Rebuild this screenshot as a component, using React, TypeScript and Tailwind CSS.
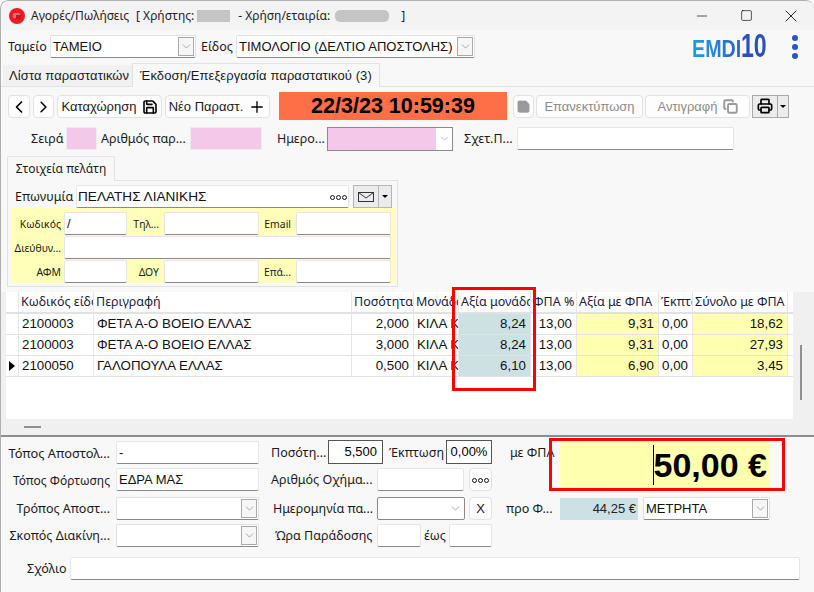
import type { ReactNode } from 'react';
import { ChevronDown, ChevronLeft, ChevronRight, Copy, Minus, Plus, Printer, Save, Square, X } from 'lucide-react';

const ui = "font-['Noto_Sans','Open_Sans',sans-serif]";
const data = "font-['Liberation_Sans',Arial,sans-serif]";

function Label({ children, w, size = 'text-[12.5px]', className = '' }: { children: ReactNode; w: string; size?: string; className?: string }) {
  return <div className={`${w} ${size} shrink-0 translate-y-[1px] whitespace-nowrap leading-none text-[#1a1a1a] ${className}`}>{children}</div>;
}

function Input({ w, value, className = '' }: { w: string; value?: string; className?: string }) {
  return (
    <div className={`${w} ${data} flex h-[23px] shrink-0 items-center rounded-[2px] border border-[#e6e6e6] border-b-[#8a8a8a] bg-white px-[2px] pt-[1px] text-[13px] text-[#111] ${className}`}>
      {value}
    </div>
  );
}

function Select({ w, value, boxed = false, dark = false }: { w: string; value?: string; boxed?: boolean; dark?: boolean }) {
  return (
    <div className={`${w} ${data} flex h-[23px] shrink-0 items-center justify-between rounded-[2px] border ${dark ? 'border-[#8a8a8a]' : 'border-[#e0e0e0] border-b-[#8a8a8a]'} bg-white text-[13px] text-[#111]`}>
      <span className="flex h-full flex-1 items-center px-[2px] pt-[1px]">{value}</span>
      <span className={`mr-[1px] flex h-[19px] w-[16px] items-center justify-center ${boxed ? 'border border-[#a9a9a9] bg-[#f6f6f6]' : ''}`}>
        <ChevronDown size={13} strokeWidth={1} className="text-[#666]" />
      </span>
    </div>
  );
}

function Dots() {
  return (
    <span className="flex gap-[1px]">
      <span className="h-[5px] w-[5px] rounded-full border border-[#111]" />
      <span className="h-[5px] w-[5px] rounded-full border border-[#111]" />
      <span className="h-[5px] w-[5px] rounded-full border border-[#111]" />
    </span>
  );
}

function Btn({ children, w, disabled = false }: { children: ReactNode; w: string; disabled?: boolean }) {
  return (
    <div className={`${w} ${data} flex h-[23px] shrink-0 items-center justify-center gap-[5px] rounded-[4px] border border-[#e2e2e2] bg-[#fdfdfd] pt-[1px] text-[13px] ${disabled ? 'text-[#8c8c8c]' : 'text-[#1a1a1a]'}`}>
      {children}
    </div>
  );
}

function Caret() {
  return <span className="h-0 w-0 border-x-[3px] border-t-[3px] border-x-transparent border-t-black" />;
}

const columns = [
  { w: 'w-[75px]', title: 'Κωδικός είδους' },
  { w: 'w-[258px]', title: 'Περιγραφή' },
  { w: 'w-[62px]', title: 'Ποσότητα' },
  { w: 'w-[45px]', title: 'Μονάδα' },
  { w: 'w-[72px]', title: 'Αξία μονάδας' },
  { w: 'w-[46px]', title: 'ΦΠΑ %' },
  { w: 'w-[82px]', title: 'Αξία με ΦΠΑ' },
  { w: 'w-[34px]', title: 'Έκπτωση' },
  { w: 'w-[95px]', title: 'Σύνολο με ΦΠΑ' },
];

const lines = [
  { code: '2100003', desc: 'ΦΕΤΑ Α-Ο ΒΟΕΙΟ ΕΛΛΑΣ', qty: '2,000', unit: '8,24', vat: '9,31', total: '18,62' },
  { code: '2100003', desc: 'ΦΕΤΑ Α-Ο ΒΟΕΙΟ ΕΛΛΑΣ', qty: '3,000', unit: '8,24', vat: '9,31', total: '27,93' },
  { code: '2100050', desc: 'ΓΑΛΟΠΟΥΛΑ ΕΛΛΑΣ', qty: '0,500', unit: '6,10', vat: '6,90', total: '3,45' },
];

function Cell({ w, children, right = false, bg = '' }: { w: string; children: ReactNode; right?: boolean; bg?: string }) {
  return (
    <div className={`${w} ${bg} flex h-full shrink-0 items-center overflow-hidden whitespace-nowrap border-r border-[#e6e6e6] ${right ? 'justify-end pr-[4px]' : 'pl-[3px]'}`}>
      {children}
    </div>
  );
}

function Grid() {
  return (
    <div className="relative flex h-[145px] shrink-0 border-b-2 border-[#8c8c8c] bg-[#f0f0f0] pl-[6px]">
      <div className="flex w-[787px] flex-col">
        <div className={`${data} flex-1 bg-white text-[13.3px] text-[#111]`}>
          <div className="flex h-[22px] border-b-2 border-[#e2e2e2]">
            <div className="w-[13px] shrink-0 border-r border-[#e6e6e6]" />
            {columns.map((c) => (
              <div key={c.title} className={`${c.w} ${ui} flex shrink-0 items-center overflow-hidden whitespace-nowrap border-r border-[#e6e6e6] px-[2px] pt-[1px] text-[12.5px] text-[#1a1a40]`}>
                {c.title}
              </div>
            ))}
          </div>
          {lines.map((l, i) => (
            <div key={i} className="flex h-[21px] border-b border-[#e2e2e2]">
              <div className="flex w-[13px] shrink-0 items-center justify-center border-r border-[#e6e6e6]">
                {i === 2 && <span className="h-0 w-0 border-y-[5px] border-l-[6px] border-y-transparent border-l-black" />}
              </div>
              <Cell w="w-[75px]">{l.code}</Cell>
              <Cell w="w-[258px]">{l.desc}</Cell>
              <Cell w="w-[62px]" right>{l.qty}</Cell>
              <Cell w="w-[45px]">ΚΙΛΑ Κ</Cell>
              <Cell w="w-[72px]" right bg="bg-[#cde1e5]">{l.unit}</Cell>
              <Cell w="w-[46px]" right>13,00</Cell>
              <Cell w="w-[82px]" right bg="bg-[#ffffb0]">{l.vat}</Cell>
              <Cell w="w-[34px]" right>0,00</Cell>
              <Cell w="w-[95px]" right bg="bg-[#ffffb0]">{l.total}</Cell>
            </div>
          ))}
        </div>
        <div className="flex h-[16px] shrink-0 items-center pl-[18px]">
          <div className="h-[2px] w-[17px] bg-[#8f8f8f]" />
        </div>
      </div>
      <div className="flex w-[21px] justify-center pt-[53px]">
        <div className="ml-[-6px] h-[55px] w-[2px] bg-[#8f8f8f]" />
      </div>
      <div className="absolute left-[452px] top-[-5px] h-[104px] w-[84px] border-[3px] border-[#ff0000]" />
    </div>
  );
}

function Customer() {
  const small = 'text-[10.4px]';
  return (
    <div className="ml-[7px] mt-[6px] w-[391px]">
      <div className={`${ui} relative z-10 flex h-[25px] w-[108px] items-center justify-center rounded-t-[2px] border border-b-0 border-[#e2e2e2] bg-[#f8f8f8] text-[12px] text-[#1a1a1a]`}>
        Στοιχεία πελάτη
      </div>
      <div className="mt-[-1px] h-[107px] border border-[#e2e2e2] pl-[3px] pr-[1px] pt-[4px]">
        <div className={`${ui} flex h-[23px] items-center pl-[4px]`}>
          <Label w="w-[61px]">Επωνυμία</Label>
          <div className={`${data} flex h-[23px] w-[273px] items-center justify-between rounded-[2px] border border-[#e6e6e6] border-b-[#8a8a8a] bg-white pl-[1px] pr-[1px] pt-[1px] text-[13.6px] text-[#111]`}>
            ΠΕΛΑΤΗΣ ΛΙΑΝΙΚΗΣ
            <Dots />
          </div>
          <div className="ml-[4px] flex h-[23px] w-[39px] border border-[#b5b5b5] bg-[#ececec]">
            <div className="flex w-[25px] items-center justify-center border-r border-[#b5b5b5]">
              <svg width="16" height="10" viewBox="0 0 16 10" fill="none" stroke="#333" strokeWidth="1">
                <rect x="0.5" y="0.5" width="15" height="9" />
                <path d="M0.5 0.5 8 6l7.5-5.5" />
              </svg>
            </div>
            <div className="flex flex-1 items-center justify-center"><Caret /></div>
          </div>
        </div>
        <div className={`${ui} flex h-[75px] flex-col gap-[1px] bg-[#ffffb9] pl-[2px] pt-[4px]`}>
          <div className="flex items-center">
            <Label w="w-[48px]" size={small} className="text-right">Κωδικός</Label>
            <Input w="w-[63px] ml-[3px]" value="/" />
            <Label w="w-[32px]" size={small} className="text-right">Τηλ...</Label>
            <Input w="w-[95px] ml-[5px]" />
            <Label w="w-[32px]" size={small} className="text-right">Email</Label>
            <Input w="w-[95px] ml-[5px]" />
          </div>
          <div className="flex items-center">
            <Label w="w-[48px]" size={small} className="text-right">Διεύθυν...</Label>
            <Input w="w-[327px] ml-[3px]" />
          </div>
          <div className="flex items-center">
            <Label w="w-[48px]" size={small} className="text-right">ΑΦΜ</Label>
            <Input w="w-[63px] ml-[3px]" />
            <Label w="w-[32px]" size={small} className="text-right">ΔΟΥ</Label>
            <Input w="w-[95px] ml-[5px]" />
            <Label w="w-[32px]" size={small} className="text-right">Επά...</Label>
            <Input w="w-[95px] ml-[5px]" />
          </div>
        </div>
      </div>
    </div>
  );
}

function Footer() {
  return (
    <div className={`${ui} relative flex flex-wrap items-start pt-[3px]`}>
      <div className="flex w-[500px] flex-col">
        <div className="flex items-center">
          <Label w="w-[110px]" size="text-[12.8px]" className="text-right">Τόπος Αποστολ...</Label>
          <Input w="w-[143px] ml-[6px]" value="-" />
          <Label w="w-[56px] ml-[12px]">Ποσότη...</Label>
          <div className={`${data} ml-[1px] flex h-[24px] w-[55px] items-center justify-end border border-[#555] bg-white pr-[5px] text-[13px]`}>5,500</div>
          <Label w="w-[57px] ml-[6px]">Έκπτωση</Label>
          <div className={`${data} flex h-[24px] w-[46px] items-center justify-center border border-[#555] bg-white text-[13px]`}>0,00%</div>
        </div>
        <div className="mt-[4px] flex items-center">
          <Label w="w-[110px]" size="text-[12px]" className="text-right">Τόπος Φόρτωσης</Label>
          <Input w="w-[143px] ml-[6px]" value="ΕΔΡΑ ΜΑΣ" />
          <Label w="w-[106px] ml-[12px]">Αριθμός Οχήμα...</Label>
          <Input w="w-[87px]" />
          <Btn w="w-[23px] ml-[5px]"><Dots /></Btn>
        </div>
        <div className="mt-[6px] flex items-center">
          <Label w="w-[110px]" className="text-right">Τρόπος Αποστ...</Label>
          <Select w="w-[143px] ml-[6px]" boxed />
          <Label w="w-[104px] ml-[14px]">Ημερομηνία πα...</Label>
          <Select w="w-[88px]" dark />
          <Btn w="w-[23px] ml-[4px]">Χ</Btn>
        </div>
        <div className="mt-[4px] flex items-center">
          <Label w="w-[110px]" className="text-right">Σκοπός Διακίνη...</Label>
          <Select w="w-[143px] ml-[6px]" boxed />
          <Label w="w-[102px] ml-[16px]">Ώρα Παράδοσης</Label>
          <Input w="w-[44px]" />
          <Label w="w-[28px]" className="pl-[3px]">έως</Label>
          <Input w="w-[43px]" />
        </div>
      </div>
      <div className="mt-[1px] flex w-[270px] flex-col">
        <div className="flex h-[51px] items-start">
          <Label w="w-[60px] pl-[10px] pt-[5px]">με ΦΠΑ</Label>
          <div className="flex h-[47px] w-[210px] items-center justify-end bg-[#ffffb0] pr-[3px]">
            <span className="h-[40px] w-[1px] bg-black" />
            <span className={`${data} text-[34px] font-bold leading-none text-black`}>50,00 €</span>
          </div>
        </div>
        <div className="mt-[5px] flex items-center">
          <Label w="w-[60px] pl-[6px]">προ Φ...</Label>
          <div className={`${data} flex h-[22px] w-[78px] items-center justify-end bg-[#cde1e5] pr-[2px] text-[13px] text-[#222]`}>44,25 €</div>
          <Select w="w-[127px] ml-[5px]" value="ΜΕΤΡΗΤΑ" boxed />
        </div>
      </div>
      <div className="mt-[10px] flex w-full items-center">
        <Label w="w-[38px] ml-[27px]">Σχόλιο</Label>
        <Input w="w-[730px] ml-[5px]" />
      </div>
      <div className="absolute left-[549px] top-[1px] h-[53px] w-[236px] border-[3px] border-[#ff0000]" />
    </div>
  );
}

export default function App() {
  return (
    <div className={`${ui} relative flex h-[592px] w-[814px] flex-col overflow-hidden rounded-t-[8px] bg-[#f8f8f8]`}>
      {/* Title bar */}
      <div className="flex h-[30px] shrink-0 items-center bg-[#f3f3f3] pl-[9px] pt-[1px]">
        <svg width="16" height="16" viewBox="0 0 16 16" className="shrink-0">
          <circle cx="8" cy="8" r="8" fill="#ee1c25" />
          <rect x="4" y="5" width="7" height="5" rx="1" fill="#e86a6a" />
          <rect x="7" y="7" width="5" height="4" fill="#c9151d" />
        </svg>
        <span className="ml-[6px] text-[12px] text-[#222]">Αγορές/Πωλήσεις</span>
        <span className="ml-[7px] text-[12px] text-[#222]">[ Χρήστης:</span>
        <span className="ml-[3px] h-[12px] w-[33px] bg-[#c4c4c4]" />
        <span className="ml-[8px] text-[12px] text-[#222]">- Χρήση/εταιρία:</span>
        <span className="ml-[5px] h-[12px] w-[54px] rounded-[5px] bg-[#c4c4c4]" />
        <span className="ml-[12px] text-[12px] text-[#222]">]</span>
        <div className="ml-auto flex items-center">
          <Minus size={16} strokeWidth={1} className="mr-[30px] text-black" />
          <Square size={13} strokeWidth={1.2} className="mr-[28px] text-black" />
          <X size={20} strokeWidth={1} className="mr-[13px] text-black" />
        </div>
      </div>

      {/* Cash register and type */}
      <div className="flex h-[28px] shrink-0 items-center pl-[8px] pt-[5px]">
        <Label w="w-[42px]">Ταμείο</Label>
        <Select w="w-[146px]" value="ΤΑΜΕΙΟ" boxed />
        <Label w="w-[35px] ml-[5px]">Είδος</Label>
        <Select w="w-[239px]" value="ΤΙΜΟΛΟΓΙΟ (ΔΕΛΤΙΟ ΑΠΟΣΤΟΛΗΣ)" boxed />
        <div className={`${data} ml-[217px] flex h-[24px] w-[75px] items-end font-bold leading-none`}>
          <span className="mb-[-2px] mr-[-11px] block w-[60px] origin-left scale-x-[0.82] bg-gradient-to-r from-[#1d9ee8] to-[#2a60d0] bg-clip-text text-[24px] text-transparent">EMDI</span>
          <span className="mb-[-3px] block w-[26px] origin-left scale-x-[0.7] text-[33px] text-[#2a50c0]">10</span>
        </div>
        <span className="ml-auto mr-[16px] flex flex-col gap-[3px]">
          <span className="h-[6px] w-[6px] rounded-full bg-[#2d55c0]" />
          <span className="h-[6px] w-[6px] rounded-full bg-[#2d55c0]" />
          <span className="h-[6px] w-[6px] rounded-full bg-[#2d55c0]" />
        </span>
      </div>

      {/* Tabs */}
      <div className={`${data} mt-[5px] flex h-[24px] shrink-0 items-end border-b border-[#e2e2e2] pl-[3px] text-[13px] tracking-[0.1px] text-[#1a1a1a]`}>
        <div className="flex h-[21px] w-[129px] items-center whitespace-nowrap bg-[#f1f1f1] pl-[6px]">Λίστα παραστατικών</div>
        <div className="mb-[-1px] flex h-[24px] w-[248px] items-center justify-center border border-b-0 border-[#e2e2e2] bg-[#f8f8f8]">Έκδοση/Επεξεργασία παραστατικού (3)</div>
      </div>

      {/* Toolbar */}
      <div className="mt-[5px] flex h-[28px] shrink-0 items-center pl-[8px]">
        <Btn w="w-[22px]"><ChevronLeft size={20} strokeWidth={2} className="text-black" /></Btn>
        <Btn w="w-[21px] ml-[3px]"><ChevronRight size={20} strokeWidth={2} className="text-black" /></Btn>
        <Btn w="w-[105px] ml-[3px]">Καταχώρηση <Save size={16} strokeWidth={2.4} className="text-black" /></Btn>
        <Btn w="w-[105px] ml-[3px]">Νέο Παραστ. <Plus size={18} strokeWidth={1.8} className="text-black" /></Btn>
        <div className={`${data} ml-[9px] flex h-[28px] w-[228px] items-center justify-center bg-[#ff6f47] text-[21.5px] font-bold text-black`}>22/3/23 10:59:39</div>
        <Btn w="w-[21px] ml-[6px]" disabled><Save size={15} fill="#9a9a9a" strokeWidth={1} className="text-[#9a9a9a]" /></Btn>
        <Btn w="w-[107px] ml-[2px]" disabled>Επανεκτύπωση</Btn>
        <Btn w="w-[105px] ml-[2px]" disabled>Αντιγραφή <Copy size={15} strokeWidth={3} className="text-[#9a9a9a]" /></Btn>
        <div className="ml-[2px] flex h-[23px] w-[37px] border border-[#a9a9a9] bg-[#ececec]">
          <div className="flex w-[25px] items-center justify-center border-r border-[#a9a9a9]">
            <Printer size={16} strokeWidth={2.5} className="text-black" />
          </div>
          <div className="flex flex-1 items-center justify-center"><Caret /></div>
        </div>
      </div>

      {/* Document fields */}
      <div className="mt-[7px] flex h-[23px] shrink-0 items-center">
        <Label w="w-[32px] ml-[31px]">Σειρά</Label>
        <div className="ml-[3px] h-[23px] w-[31px] border border-[#ececec] bg-[#f3c8e8]" />
        <Label w="w-[86px] ml-[4px]">Αριθμός παρ...</Label>
        <div className="ml-[3px] h-[23px] w-[72px] border border-[#ececec] bg-[#f3c8e8]" />
        <Label w="w-[48px] ml-[15px]">Ημερο...</Label>
        <div className="ml-[2px] flex h-[24px] w-[126px] items-center border border-[#8a8a8a] bg-white">
          <div className="h-full w-[108px] bg-[#f3c8e8]" />
          <ChevronDown size={13} strokeWidth={1} className="ml-[2px] text-[#888]" />
        </div>
        <Label w="w-[52px] ml-[11px]">Σχετ.Π...</Label>
        <Input w="w-[217px] ml-[1px]" />
      </div>

      <Customer />
      <div className="h-[5px] shrink-0" />
      <Grid />
      <Footer />

      {/* Window outline */}
      <div className="pointer-events-none absolute inset-0 rounded-t-[8px] border-l border-t border-[#b0b0b0]" />
    </div>
  );
}
